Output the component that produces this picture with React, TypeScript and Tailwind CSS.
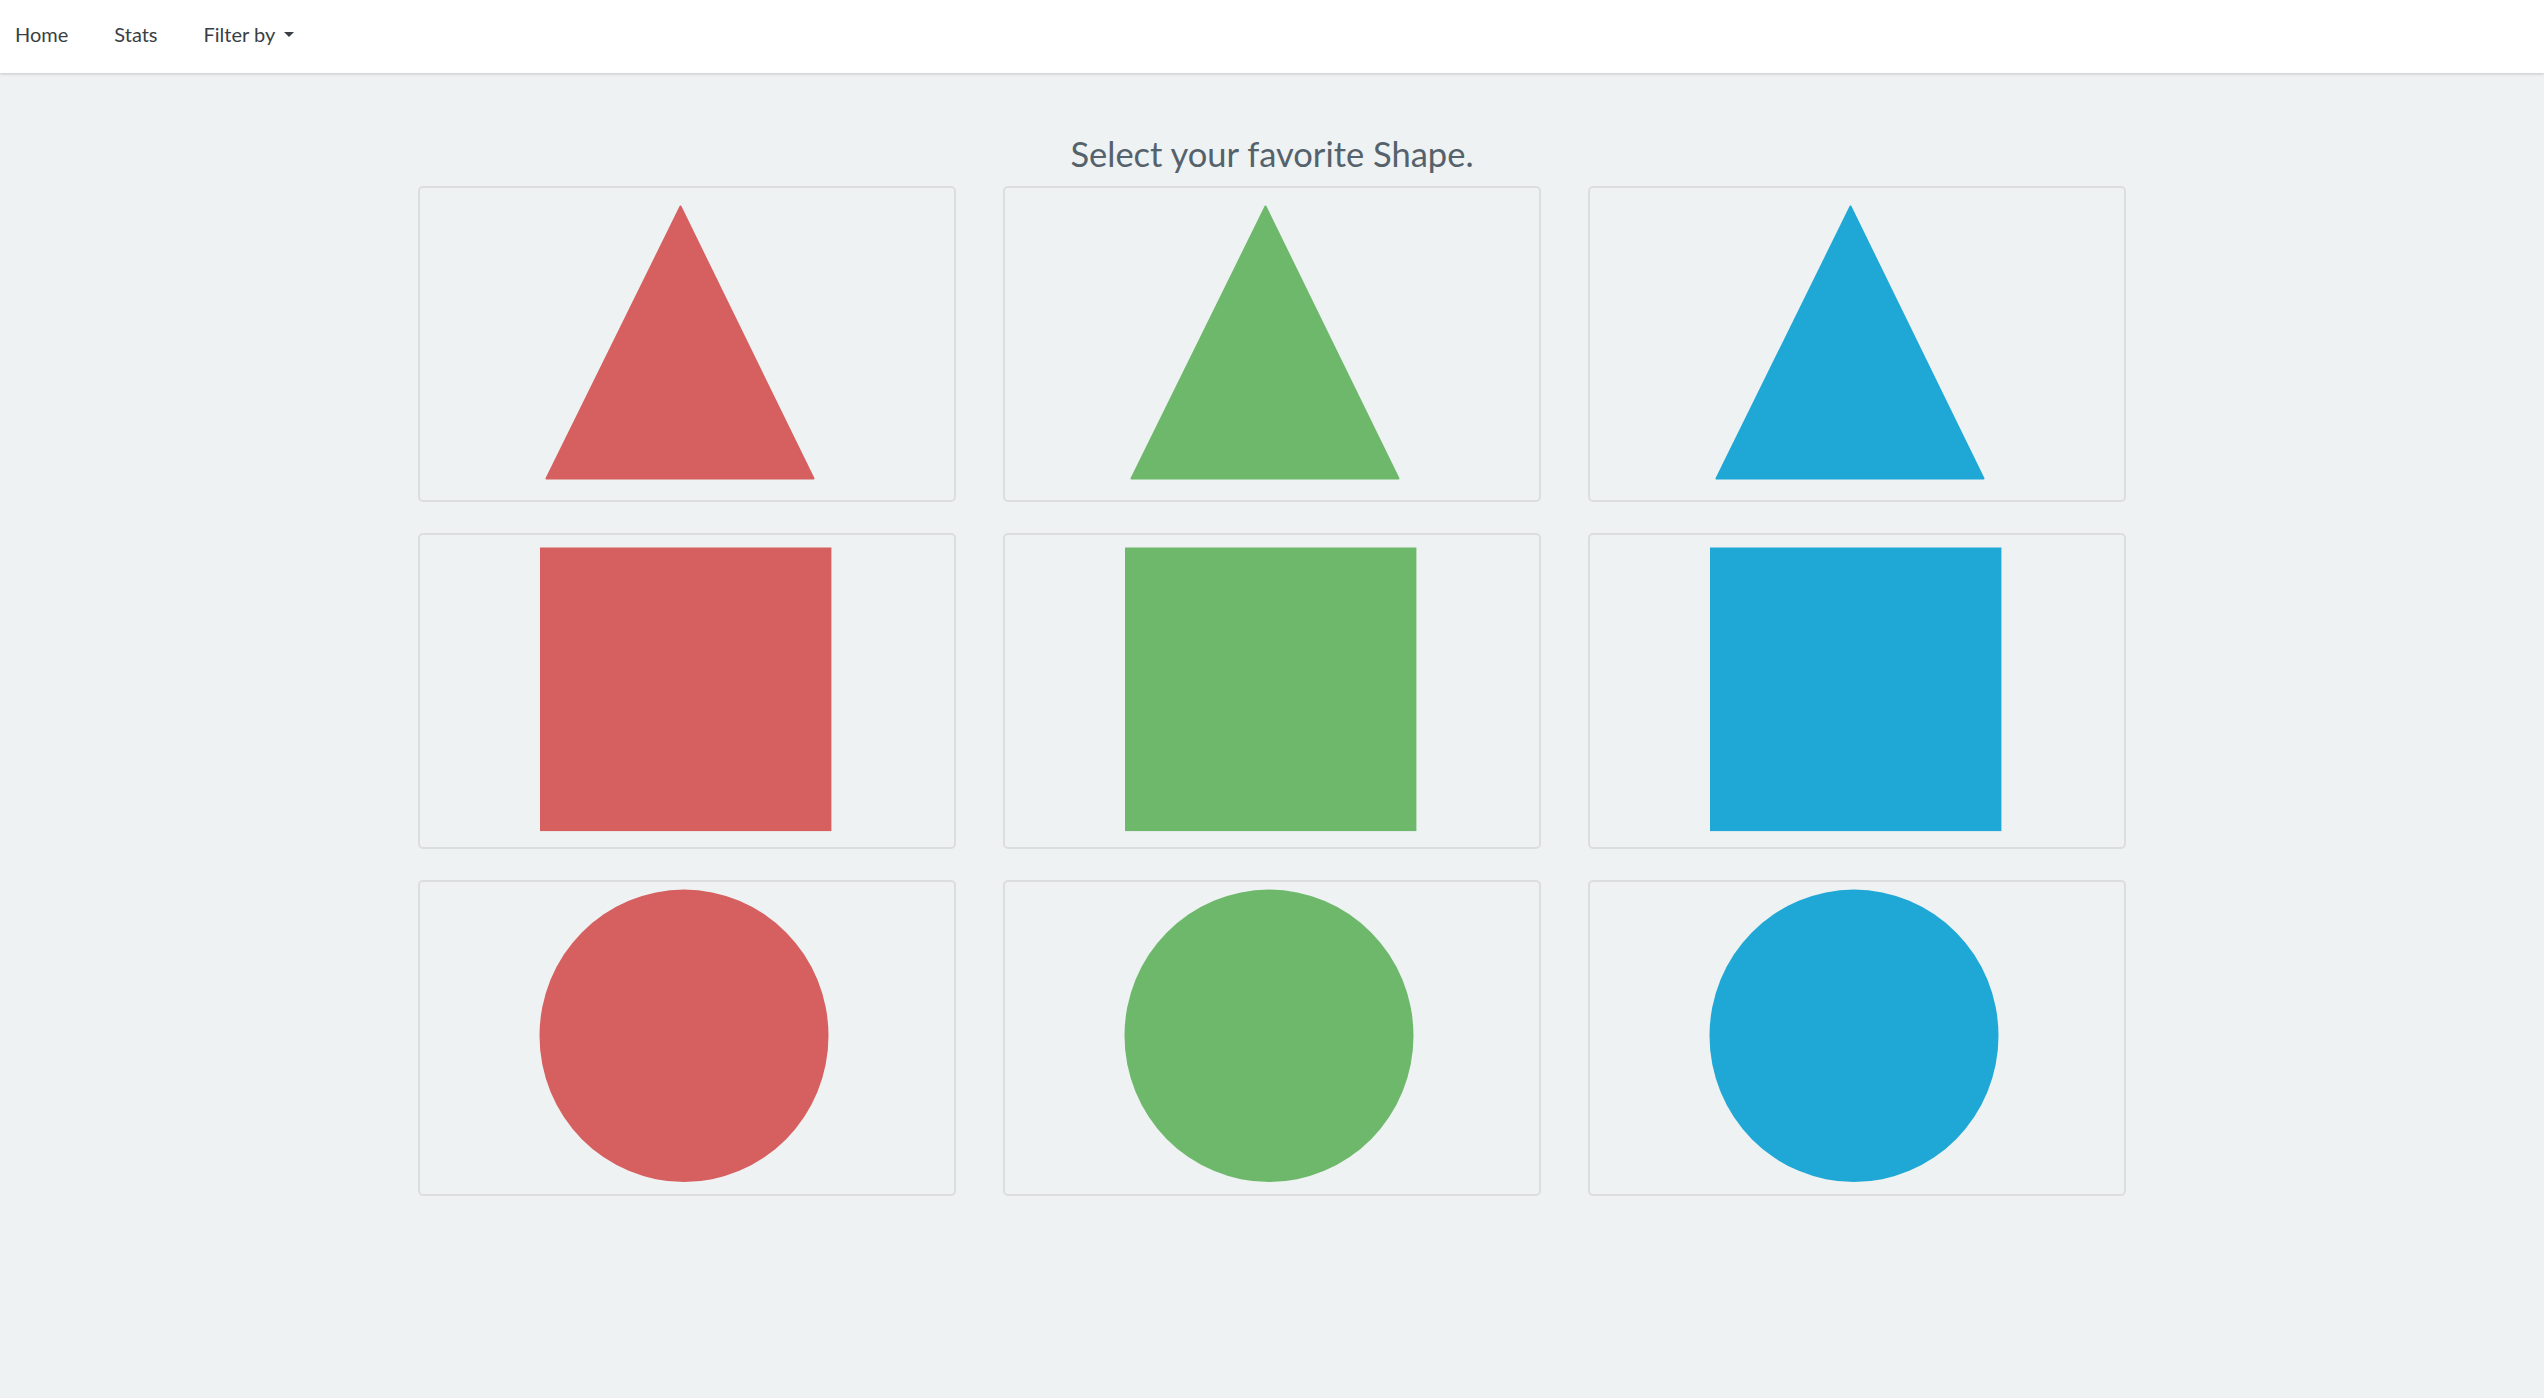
import React from 'react';

type Shape = 'triangle' | 'square' | 'circle';

const colors = ['#d66060', '#6eb86b', '#1fa8d6'];
const shapes: Shape[] = ['triangle', 'square', 'circle'];

function ShapeArt({ shape, color }: { shape: Shape; color: string }) {
  return (
    <svg width="534" height="312" viewBox="0 0 534 312" className="block">
      {shape === 'triangle' && (
        <polygon
          points="260.5,18.5 126.5,290.5 393.5,290.5"
          fill={color}
          stroke={color}
          strokeWidth={2}
          strokeLinejoin="round"
        />
      )}
      {shape === 'square' && <rect x="120" y="12.5" width="291.4" height="283.6" fill={color} />}
      {shape === 'circle' && <ellipse cx="264" cy="153.8" rx="144.5" ry="146.2" fill={color} />}
    </svg>
  );
}

export default function App() {
  return (
    <div className="min-h-screen bg-[#eef2f3] font-['Lato','Open_Sans',sans-serif]">
      <nav className="flex h-[73px] items-center gap-[46px] bg-white px-[15px] pb-[5px] text-[20px] text-[#3a3f45] shadow-[0_1px_3px_rgba(0,0,0,0.18)]">
        <a className="cursor-pointer">Home</a>
        <a className="cursor-pointer">Stats</a>
        <a className="flex cursor-pointer items-center gap-[9px]">
          Filter by
          <span className="h-0 w-0 border-x-[5px] border-t-[5px] border-x-transparent border-t-[#3a3f45]" />
        </a>
      </nav>

      <main className="flex flex-col items-center pb-20">
        <h3 className="mt-[62px] mb-[13px] text-[34.5px] leading-[1.1] text-[#55626c]">
          Select your favorite Shape.
        </h3>
        <div className="grid grid-cols-[repeat(3,538px)] gap-x-[47px] gap-y-[31px]">
          {shapes.map((shape) =>
            colors.map((color) => (
              <div
                key={`${shape}-${color}`}
                className="h-[316px] cursor-pointer overflow-hidden rounded-[5px] border-2 border-[#dcdddf]"
              >
                <ShapeArt shape={shape} color={color} />
              </div>
            ))
          )}
        </div>
      </main>
    </div>
  );
}
